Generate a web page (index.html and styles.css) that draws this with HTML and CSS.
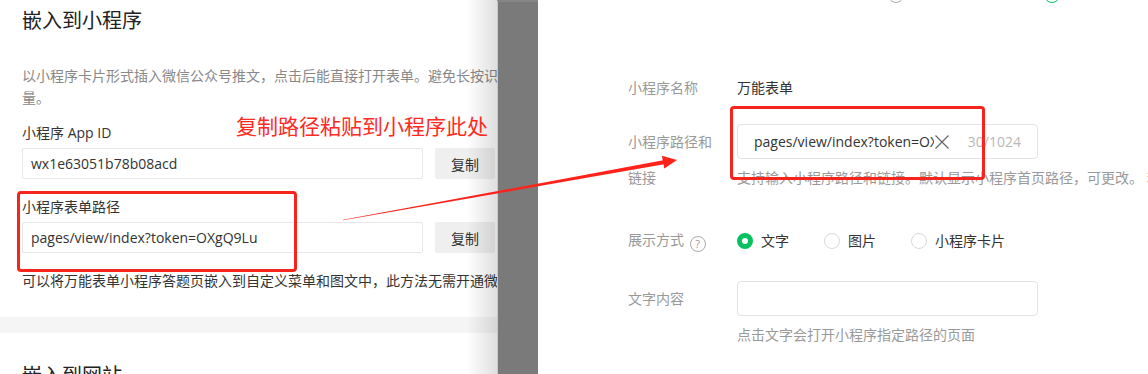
FILE: index.html
```html
<!DOCTYPE html>
<html lang="zh-CN">
  <head>
    <meta charset="UTF-8" />
    <title>嵌入到小程序</title>
    <link rel="stylesheet" href="styles.css">
  </head>

  <body>
    <div class="screen">
      <!-- 左侧：发布页 -->
      <div class="page">
        <div class="section">
          <h2 class="title">嵌入到小程序</h2>
          <p class="desc">以小程序卡片形式插入微信公众号推文，点击后能直接打开表单。避免长按识别二维码，提高表单访问量。</p>

          <div class="label">小程序 App ID</div>
          <div class="copy-row">
            <div class="copy-input">wx1e63051b78b08acd</div>
            <button class="copy-btn">复制</button>
          </div>

          <div class="label">小程序表单路径</div>
          <div class="copy-row">
            <div class="copy-input">pages/view/index?token=OXgQ9Lu</div>
            <button class="copy-btn">复制</button>
          </div>

          <p class="help">可以将万能表单小程序答题页嵌入到自定义菜单和图文中，此方法无需开通微信小程序</p>
        </div>

        <div class="band"></div>

        <div class="section">
          <h2 class="title">嵌入到网站</h2>
        </div>

        <div class="edge-shade"></div>
      </div>

      <!-- 遮罩 -->
      <div class="mask"></div>

      <!-- 右侧：公众号编辑器弹窗 -->
      <div class="drawer">
        <div class="top-row">
          <span class="radio"></span>
          <span class="radio radio-green"></span>
        </div>

        <div class="form">
          <div class="row row-name">
            <div class="f-label">小程序名称</div>
            <div class="f-value">万能表单</div>
          </div>

          <div class="row row-path">
            <div class="f-label f-label-tall">小程序路径和链接</div>
            <div class="f-control">
              <div class="field">
                <span class="field-text">pages/view/index?token=OXgQ9Lu</span>
                <svg class="clear" width="16" height="16" viewBox="0 0 16 16">
                  <path d="M1.5 1.5L14.5 14.5M14.5 1.5L1.5 14.5" stroke="#666" stroke-width="1.2" fill="none" />
                </svg>
                <span class="count">30/1024</span>
              </div>
              <div class="f-help">支持输入小程序路径和链接。默认显示小程序首页路径，可更改。 若</div>
            </div>
          </div>

          <div class="row row-mode">
            <div class="f-label">展示方式 <span class="qmark">?</span></div>
            <div class="f-control radios">
              <label class="option"><span class="radio radio-on"></span>文字</label>
              <label class="option"><span class="radio"></span>图片</label>
              <label class="option"><span class="radio"></span>小程序卡片</label>
            </div>
          </div>

          <div class="row row-text">
            <div class="f-label f-label-input">文字内容</div>
            <div class="f-control">
              <div class="field"></div>
              <div class="f-help">点击文字会打开小程序指定路径的页面</div>
            </div>
          </div>
        </div>
      </div>
    </div>

    <!-- 标注 -->
    <div class="note">复制路径粘贴到小程序此处</div>
    <div class="mark mark-left"></div>
    <div class="mark mark-right"></div>
    <svg class="arrow" width="1148" height="374" viewBox="0 0 1148 374">
      <polygon points="343.1,219.7 342.9,220.3 665.4,164.1 664.6,160.1" fill="#ff2219" />
      <polygon points="677,160 664.3,168.6 661.9,155.8" fill="#ff2219" />
    </svg>
  </body>
</html>
```

FILE: styles.css
```css
body {
  margin: 0;
  width: 1148px;
  height: 374px;
  overflow: hidden;
  position: relative;
  background-color: #fff;
  font-family: "Open Sans", "Noto Sans CJK SC", sans-serif;
  font-size: 14px;
  color: #333;
}

.screen {
  display: flex;
  height: 374px;
}

/* 左侧页面 */
.page {
  width: 497px;
  flex-shrink: 0;
  position: relative;
  overflow: hidden;
  background-color: #fff;
}

.section {
  width: 632px;
  padding: 0 22px;
}

.title {
  margin: 0;
  padding-top: 7px;
  font-size: 20px;
  line-height: 28px;
  font-weight: normal;
  color: #222;
}

.desc {
  margin: 30px 0 0;
  line-height: 22px;
  color: #888;
}

.label {
  margin-top: 14px;
  line-height: 20px;
}

.copy-row {
  display: flex;
  gap: 12px;
  margin-top: 5px;
  margin-bottom: 18px;
}

.copy-input {
  width: 383px;
  height: 29px;
  padding: 0 8px;
  border: 1px solid #e6e6e6;
  border-radius: 2px;
  line-height: 29px;
}

.copy-btn {
  width: 60px;
  height: 31px;
  border: none;
  border-radius: 2px;
  background-color: #efefef;
  font-family: inherit;
  font-size: 14px;
  color: #333;
}

.copy-row + .label {
  margin-top: 0;
}

.help {
  margin: 2px 0 0;
  line-height: 20px;
  color: #333;
}

.band {
  height: 16px;
  margin-top: 26px;
  background-color: #f5f5f5;
}

.band + .section .title {
  padding-top: 29px;
}

.edge-shade {
  position: absolute;
  top: 0;
  right: 0;
  bottom: 0;
  width: 30px;
  background: linear-gradient(to right, rgba(0, 0, 0, 0), rgba(0, 0, 0, 0.13));
}

/* 遮罩 */
.mask {
  width: 40px;
  flex-shrink: 0;
  background-color: #7a7a7a;
  border-left: 1px solid #c9c9c9;
  border-top: 2px solid #868686;
}

/* 右侧弹窗 */
.drawer {
  flex: 1;
  padding-left: 90px;
  background-color: #fff;
}

.top-row {
  display: flex;
  gap: 140px;
  margin: -13px 0 0 260px;
}

.radio {
  display: inline-block;
  box-sizing: border-box;
  width: 16px;
  height: 16px;
  border: 1px solid #d9d9d9;
  border-radius: 50%;
  background-color: #fff;
  flex-shrink: 0;
}

.top-row .radio {
  border-color: #aaa;
}

.top-row .radio-green {
  border: 1.5px solid #07c160;
}

.radio-on {
  border: 5px solid #07c160;
  background-color: #fff;
}

.form {
  margin-top: 75px;
}

.row {
  display: flex;
}

.f-label {
  width: 90px;
  margin-right: 19px;
  line-height: 20px;
  color: #999;
  flex-shrink: 0;
}

.f-label-tall {
  line-height: 36px;
}

.f-label-input {
  line-height: 35px;
}

.f-value {
  line-height: 20px;
  color: #333;
}

.row-path {
  margin-top: 26px;
}

.f-control {
  width: 301px;
}

.field {
  display: flex;
  align-items: center;
  box-sizing: border-box;
  height: 35px;
  padding: 0 16px;
  border: 1px solid #e3e3e3;
  border-radius: 4px;
}

.field-text {
  flex: 1;
  min-width: 0;
  overflow: hidden;
  white-space: nowrap;
  color: #333;
}

.clear {
  flex-shrink: 0;
}

.count {
  margin-left: 18px;
  color: #b8b8b8;
}

.f-help {
  margin-top: 9px;
  line-height: 20px;
  color: #999;
  white-space: nowrap;
}

.row-mode {
  margin-top: 34px;
  align-items: center;
}

.qmark {
  display: inline-flex;
  align-items: center;
  justify-content: center;
  box-sizing: border-box;
  width: 16px;
  height: 16px;
  margin-left: 2px;
  border: 1px solid #aaa;
  border-radius: 50%;
  font-size: 11px;
  line-height: 1;
  color: #999;
  vertical-align: -3px;
}

.radios {
  display: flex;
  width: auto;
}

.option {
  display: flex;
  align-items: center;
  gap: 8px;
  margin-right: 35px;
  line-height: 20px;
}

.row-text {
  margin-top: 29px;
}

/* 标注层 */
.note {
  position: absolute;
  left: 236px;
  top: 111px;
  font-family: "Noto Sans CJK SC", sans-serif;
  font-size: 21px;
  line-height: 28px;
  color: #ff2a22;
}

.mark {
  position: absolute;
  border: 3px solid #f7241c;
  border-radius: 4px;
}

.mark-left {
  left: 17px;
  top: 191px;
  width: 274px;
  height: 75px;
}

.mark-right {
  left: 730px;
  top: 106px;
  width: 249px;
  height: 68px;
}

.arrow {
  position: absolute;
  left: 0;
  top: 0;
}
```
